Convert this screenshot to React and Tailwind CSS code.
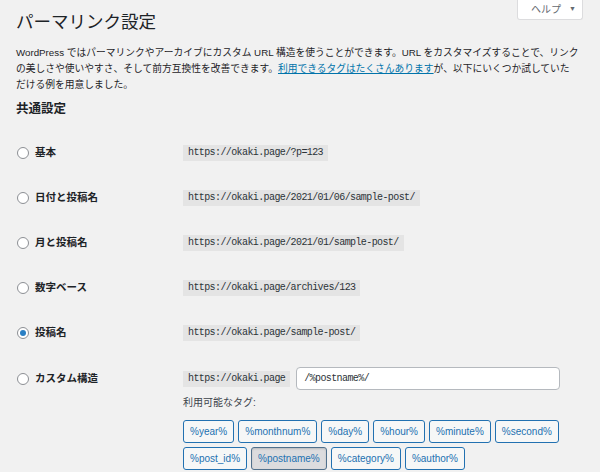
import { useState } from "react"

const options = [
  { id: "plain", label: "基本", url: "https://okaki.page/?p=123" },
  { id: "day", label: "日付と投稿名", url: "https://okaki.page/2021/01/06/sample-post/" },
  { id: "month", label: "月と投稿名", url: "https://okaki.page/2021/01/sample-post/" },
  { id: "numeric", label: "数字ベース", url: "https://okaki.page/archives/123" },
  { id: "postname", label: "投稿名", url: "https://okaki.page/sample-post/" },
]

const tags = [
  ["%year%", "%monthnum%", "%day%", "%hour%", "%minute%", "%second%"],
  ["%post_id%", "%postname%", "%category%", "%author%"],
]

function Radio({ checked, onClick }) {
  return (
    <span
      onClick={onClick}
      className="w-[12px] h-[12px] rounded-full border border-[#8c8f94] bg-white flex items-center justify-center shrink-0"
    >
      {checked && <span className="w-[6px] h-[6px] rounded-full bg-[#2a7fc4]"></span>}
    </span>
  )
}

function Code({ children }) {
  return (
    <code className="bg-[#e4e4e4] px-[5px] h-[16px] leading-[16px] text-[10px] tracking-[-0.6px] text-[#2c3338] font-['Liberation_Mono',monospace] whitespace-nowrap">
      {children}
    </code>
  )
}

export default function App() {
  const [selected, setSelected] = useState("postname")
  const [structure, setStructure] = useState("/%postname%/")

  return (
    <div className="relative w-[600px] h-[472px] overflow-hidden bg-[#f1f1f1] text-[#1d2327] font-['Liberation_Sans','Noto_Sans_CJK_JP',sans-serif] px-[16px]">
      {/* help tab */}
      <button className="absolute top-0 right-[17px] w-[66px] h-[20px] bg-white border border-t-0 border-[#dcdcde] rounded-b-[3px] flex items-center pl-[13px] gap-[8px] text-[10px] text-[#646970]">
        <span>ヘルプ</span>
        <span className="text-[7px]">▼</span>
      </button>

      <h1 className="pt-[10px] text-[17.5px] leading-[24px] font-normal">パーマリンク設定</h1>

      <p className="mt-[11px] text-[9.75px] leading-[16px] whitespace-nowrap">
        WordPress ではパーマリンクやアーカイブにカスタム URL 構造を使うことができます。URL をカスタマイズすることで、リンク<br />
        の美しさや使いやすさ、そして前方互換性を改善できます。<a href="#" className="text-[#0073aa] underline">利用できるタグはたくさんあります</a>が、以下にいくつか試していた<br />
        だける例を用意しました。
      </p>

      <h2 className="mt-[8px] text-[12.5px] leading-[16px] font-bold">共通設定</h2>

      <div className="mt-[13px] flex flex-col">
        {options.map((o) => (
          <div key={o.id} className="h-[45px] flex items-center">
            <div className="w-[167px] shrink-0 flex items-center gap-[6px] pl-[1px]">
              <Radio checked={selected === o.id} onClick={() => setSelected(o.id)} />
              <span className="text-[10.5px] font-bold">{o.label}</span>
            </div>
            <Code>{o.url}</Code>
          </div>
        ))}

        <div className="pt-[12px] flex items-start">
          <div className="w-[167px] shrink-0 h-[23px] flex items-center gap-[6px] pl-[1px]">
            <Radio checked={selected === "custom"} onClick={() => setSelected("custom")} />
            <span className="text-[10.5px] font-bold">カスタム構造</span>
          </div>
          <div className="flex flex-col">
            <div className="flex items-center gap-[6px]">
              <Code>https://okaki.page</Code>
              <input
                value={structure}
                onChange={(e) => setStructure(e.target.value)}
                className="w-[264px] h-[23px] bg-white border border-[#b5b9be] rounded-[4px] px-[7px] text-[10px] tracking-[-0.6px] text-[#2c3338] font-['Liberation_Mono',monospace] outline-none"
              />
            </div>
            <p className="mt-[5px] text-[10px] leading-[16px] text-[#3c434a]">利用可能なタグ:</p>
            <div className="mt-[9px] flex flex-col gap-[4px]">
              {tags.map((row, i) => (
                <div key={i} className="flex gap-[4px]">
                  {row.map((t) => (
                    <button
                      key={t}
                      onClick={() => setStructure(structure + t)}
                      className={
                        t === "%postname%"
                          ? "h-[23px] px-[6px] rounded-[3px] border border-[#50708c] bg-[#dcdcde] text-[#2271b1] text-[10px] leading-none shadow-[inset_0_1px_2px_rgba(0,0,0,0.15)]"
                          : "h-[23px] px-[6px] rounded-[3px] border border-[#2271b1] bg-[#f6f7f7] text-[#2271b1] text-[10px] leading-none"
                      }
                    >
                      {t}
                    </button>
                  ))}
                </div>
              ))}
            </div>
          </div>
        </div>
      </div>
    </div>
  )
}
